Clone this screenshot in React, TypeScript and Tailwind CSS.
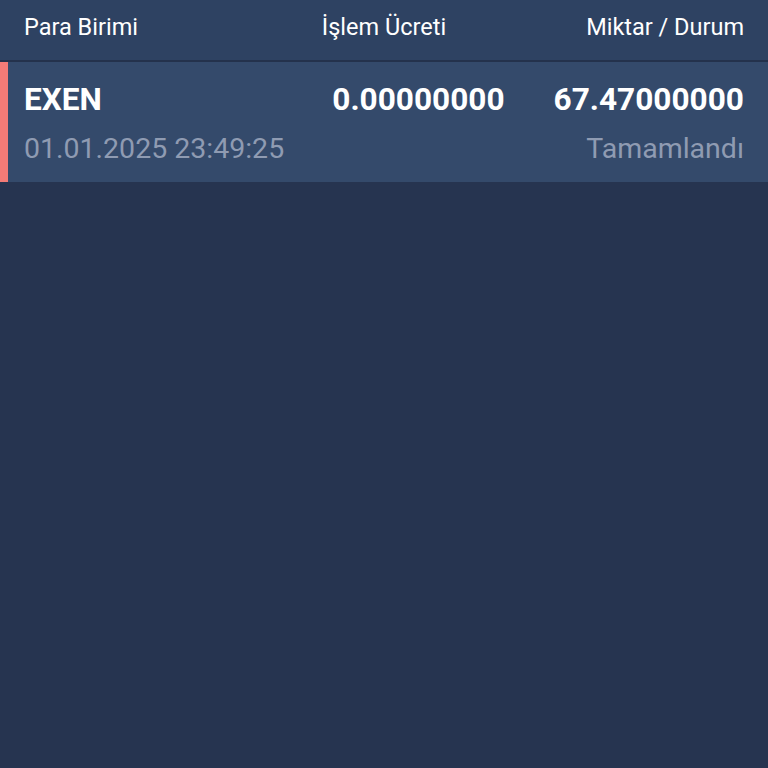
const rows = [
  {
    currency: "EXEN",
    date: "01.01.2025 23:49:25",
    fee: "0.00000000",
    amount: "67.47000000",
    status: "Tamamlandı",
  },
];

export default function App() {
  return (
    <div className="h-[768px] w-[768px] bg-[#263450] font-['Roboto',sans-serif]">
      <div className="grid h-[62px] grid-cols-[1fr_auto_1fr] items-center border-b-2 border-[#24324c] bg-[#2e4262] px-6 pb-1 text-[23.5px] leading-none text-white">
        <span>Para Birimi</span>
        <span>İşlem Ücreti</span>
        <span className="text-right">Miktar / Durum</span>
      </div>
      {rows.map((row) => (
        <div key={row.currency + row.date} className="flex h-[120px] bg-[#344a6b]">
          <div className="w-2 shrink-0 bg-[#f37b77]" />
          <div className="flex flex-1 flex-col gap-[19px] pl-4 pr-6 pt-[22px]">
            <div className="flex items-center text-[31.6px] font-bold leading-none text-white">
              <span className="flex-1">{row.currency}</span>
              <span className="mr-[49px]">{row.fee}</span>
              <span>{row.amount}</span>
            </div>
            <div className="flex items-center justify-between text-[28.5px] leading-none text-[#8f9bb2]">
              <span>{row.date}</span>
              <span>{row.status}</span>
            </div>
          </div>
        </div>
      ))}
    </div>
  );
}
